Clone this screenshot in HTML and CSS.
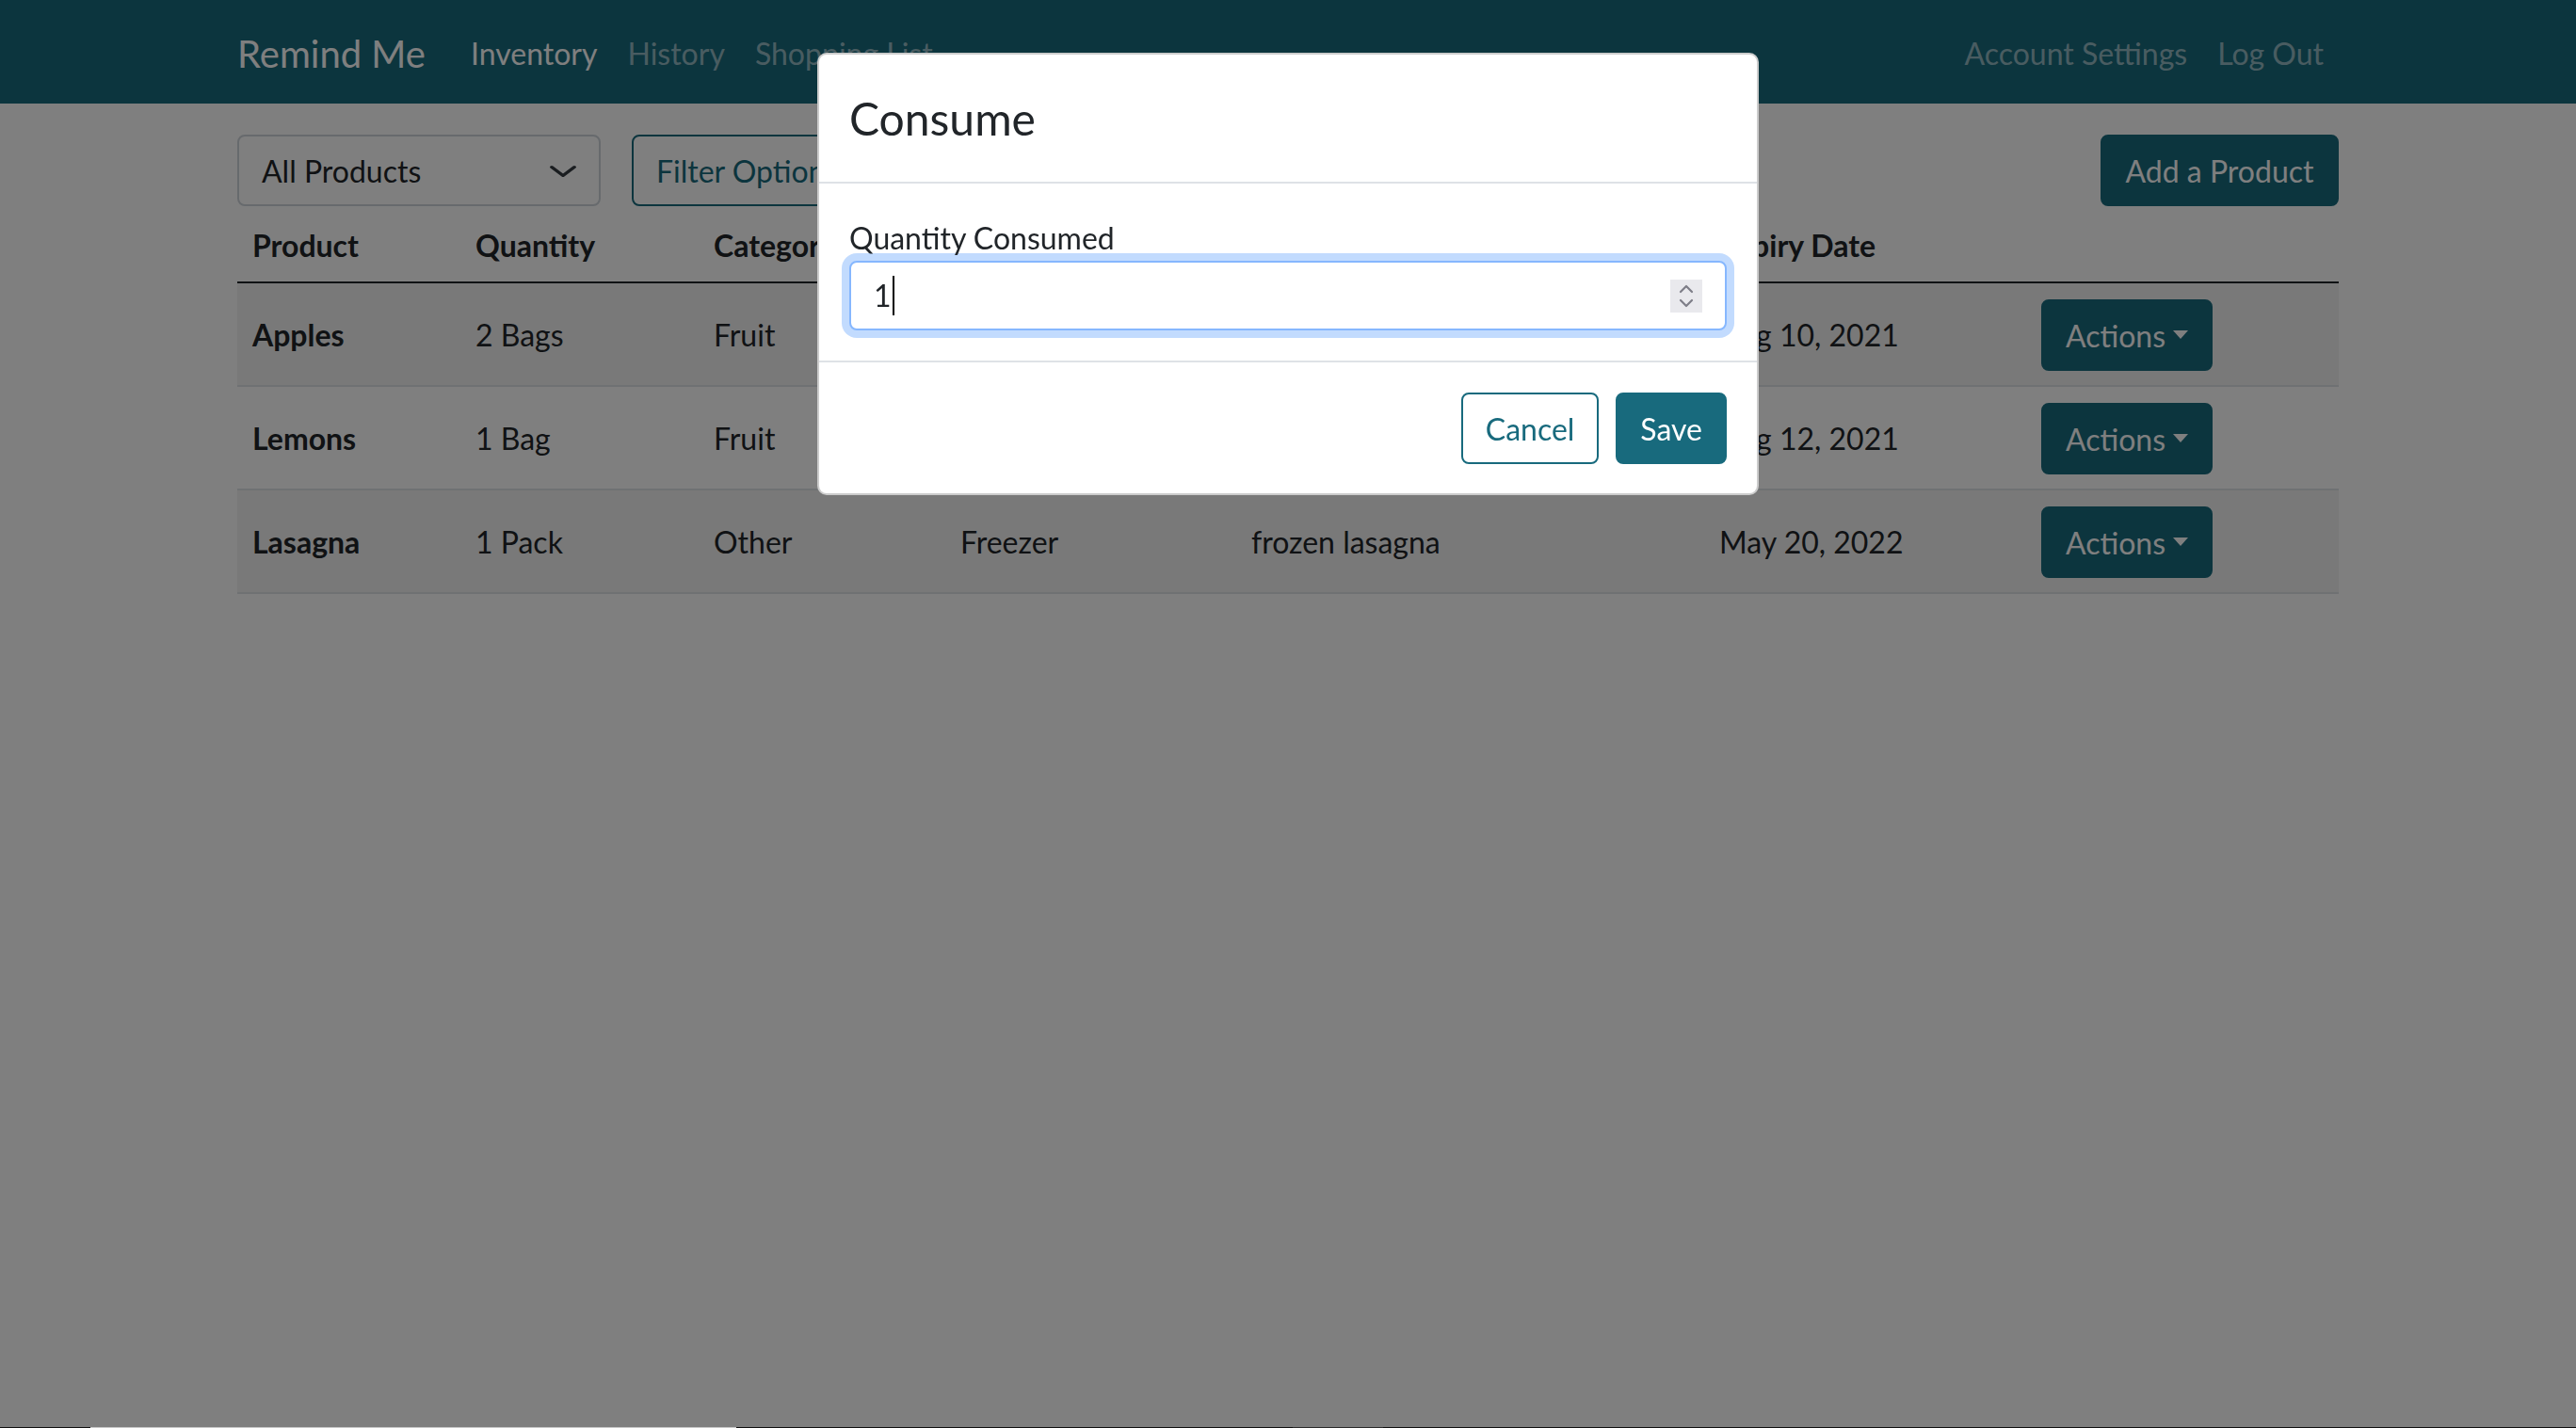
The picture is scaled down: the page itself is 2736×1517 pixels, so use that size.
FILE: index.html
```html
<!DOCTYPE html>
<html lang="en">
<head>
<meta charset="utf-8">
<title>Remind Me - Inventory</title>
<link rel="stylesheet" href="styles.css">
</head>
<body>
<nav class="navbar">
  <div class="container nav-inner">
    <a class="brand" href="#">Remind Me</a>
    <ul class="nav-links">
      <li><a class="nav-link active" href="#">Inventory</a></li>
      <li><a class="nav-link" href="#">History</a></li>
      <li><a class="nav-link" href="#">Shopping List</a></li>
    </ul>
    <ul class="nav-links nav-right">
      <li><a class="nav-link" href="#">Account Settings</a></li>
      <li><a class="nav-link" href="#">Log Out</a></li>
    </ul>
  </div>
</nav>

<main class="container main">
  <div class="toolbar">
    <button class="form-select" type="button">
      <span>All Products</span>
      <svg class="select-chevron" viewBox="0 0 16 16" width="32" height="24" preserveAspectRatio="none"><path d="M2 5l6 6 6-6" fill="none" stroke="#343a40" stroke-width="2" stroke-linecap="round" stroke-linejoin="round"/></svg>
    </button>
    <button class="btn btn-outline" type="button">Filter Options</button>
    <button class="btn btn-primary add-btn" type="button">Add a Product</button>
  </div>

  <table class="table">
    <colgroup>
      <col class="c1"><col class="c2"><col class="c3"><col class="c4"><col class="c5"><col class="c6"><col class="c7">
    </colgroup>
    <thead>
      <tr>
        <th>Product</th>
        <th>Quantity</th>
        <th>Category</th>
        <th>Location</th>
        <th>Description</th>
        <th>Expiry Date</th>
        <th></th>
      </tr>
    </thead>
    <tbody>
      <tr class="striped">
        <td class="name">Apples</td>
        <td>2 Bags</td>
        <td>Fruit</td>
        <td>Fridge</td>
        <td>red apples</td>
        <td>Aug 10, 2021</td>
        <td><button class="btn btn-primary dropdown-toggle" type="button">Actions</button></td>
      </tr>
      <tr>
        <td class="name">Lemons</td>
        <td>1 Bag</td>
        <td>Fruit</td>
        <td>Fridge</td>
        <td>yellow lemons</td>
        <td>Aug 12, 2021</td>
        <td><button class="btn btn-primary dropdown-toggle" type="button">Actions</button></td>
      </tr>
      <tr class="striped">
        <td class="name">Lasagna</td>
        <td>1 Pack</td>
        <td>Other</td>
        <td>Freezer</td>
        <td>frozen lasagna</td>
        <td>May 20, 2022</td>
        <td><button class="btn btn-primary dropdown-toggle" type="button">Actions</button></td>
      </tr>
    </tbody>
  </table>
</main>

<div class="modal-backdrop"></div>

<div class="modal" role="dialog" aria-modal="true" aria-labelledby="consume-title">
  <div class="modal-dialog">
    <div class="modal-content">
      <div class="modal-header">
        <h4 class="modal-title" id="consume-title">Consume</h4>
      </div>
      <div class="modal-body">
        <label class="form-label" for="qty">Quantity Consumed</label>
        <div class="form-control focused" id="qty" role="spinbutton" aria-valuenow="1">
          <span class="value">1</span><span class="caret"></span>
          <span class="spinner">
            <svg viewBox="0 0 34 35" width="34" height="35"><path d="M11 13l6-6 6 6" fill="none" stroke="#7e7e88" stroke-width="2.2" stroke-linecap="round" stroke-linejoin="round"/><path d="M11 22l6 6 6-6" fill="none" stroke="#7e7e88" stroke-width="2.2" stroke-linecap="round" stroke-linejoin="round"/></svg>
          </span>
        </div>
      </div>
      <div class="modal-footer">
        <button class="btn btn-outline" type="button">Cancel</button>
        <button class="btn btn-primary" type="button">Save</button>
      </div>
    </div>
  </div>
</div>

<div class="bottom-strip">
  <span class="seg seg-dark s1"></span>
  <span class="seg seg-light s2"></span>
  <span class="seg seg-dark s3"></span>
  <span class="seg seg-mid s4"></span>
  <span class="seg seg-dark s5"></span>
</div>
</body>
</html>
```

FILE: styles.css
```css
html {
  font-size: 32px;
}

* {
  box-sizing: border-box;
}

body {
  margin: 0;
  min-height: 1517px;
  font-family: Lato, "Noto Sans", "Liberation Sans", sans-serif;
  font-size: 32px;
  line-height: 1.5;
  color: #212529;
  background: #fff;
}

a {
  text-decoration: none;
}

ul {
  list-style: none;
  margin: 0;
  padding: 0;
}

.container {
  width: 2280px;
  margin: 0 auto;
  padding: 0 24px;
}

/* Navbar */
.navbar {
  height: 110px;
  background: #186a7d;
}

.nav-inner {
  height: 110px;
  display: flex;
  align-items: center;
  padding-top: 3px;
}

.brand {
  font-size: 40px;
  color: #fff;
  margin-right: 32px;
  padding: 10px 0;
  line-height: 60px;
}

.nav-links {
  display: flex;
  align-items: center;
}

.nav-right {
  margin-left: auto;
}

.nav-link {
  display: block;
  padding: 16px;
  color: rgba(255, 255, 255, 0.55);
  line-height: 48px;
}

.nav-link.active {
  color: #fff;
}

/* Main */
.main {
  padding-top: 33px;
}

.toolbar {
  display: flex;
  align-items: center;
  gap: 33px;
}

.form-select {
  width: 386px;
  height: 76px;
  display: flex;
  align-items: center;
  justify-content: space-between;
  padding: 2px 22px 0 24px;
  font: inherit;
  color: #212529;
  background: #fff;
  border: 2px solid #ced4da;
  border-radius: 8px;
  text-align: left;
}

.select-chevron {
  display: block;
}

.btn {
  display: inline-flex;
  align-items: center;
  height: 76px;
  padding: 2px 24px 0;
  font: inherit;
  line-height: 48px;
  border: 2px solid transparent;
  border-radius: 8px;
  cursor: pointer;
  white-space: nowrap;
}

.btn-primary {
  background: #186a7d;
  border-color: #186a7d;
  color: #fff;
}

.btn-outline {
  background: transparent;
  border-color: #186a7d;
  color: #186a7d;
}

.add-btn {
  margin-left: auto;
  width: 253px;
  justify-content: center;
}

.dropdown-toggle {
  width: 182px;
}

.dropdown-toggle::after {
  content: "";
  display: inline-block;
  margin-left: 8px;
  margin-top: -4px;
  border-top: 9px solid currentColor;
  border-right: 8px solid transparent;
  border-left: 8px solid transparent;
}

/* Table */
.table {
  width: 2232px;
  border-collapse: collapse;
  table-layout: fixed;
}

.c1 { width: 237px; }
.c2 { width: 253px; }
.c3 { width: 262px; }
.c4 { width: 309px; }
.c5 { width: 497px; }
.c6 { width: 342px; }
.c7 { width: 332px; }

.table th {
  text-align: left;
  font-weight: 700;
  padding: 18px 16px 14px;
  line-height: 48px;
  border-bottom: 2px solid #212529;
}

.table td {
  padding: 17px 16px 15px;
  vertical-align: middle;
  border-bottom: 2px solid #dee2e6;
  white-space: nowrap;
}

.table tr.striped td {
  background: rgba(0, 0, 0, 0.05);
}

.table td.name {
  font-weight: 700;
}

/* Modal */
.modal-backdrop {
  position: fixed;
  inset: 0;
  background: rgba(0, 0, 0, 0.5);
  z-index: 10;
}

.modal {
  position: fixed;
  inset: 0;
  z-index: 20;
}

.modal-dialog {
  width: 1000px;
  margin: 56px auto 0;
}

.modal-content {
  background: #fff;
  border: 2px solid rgba(0, 0, 0, 0.2);
  border-radius: 10px;
}

.modal-header {
  padding: 32px 32px 31px;
  border-bottom: 2px solid #dee2e6;
}

.modal-title {
  margin: 0;
  font-size: 48px;
  font-weight: 400;
  line-height: 72px;
}

.modal-body {
  padding: 32px 32px 32px;
}

.form-label {
  display: block;
  line-height: 48px;
  padding-top: 2px;
}

.form-control {
  height: 74px;
  display: flex;
  align-items: center;
  padding: 0 24px;
  border: 2px solid #ced4da;
  border-radius: 8px;
  background: #fff;
}

.form-control.focused {
  border-color: #86b7fe;
  box-shadow: 0 0 0 8px rgba(13, 110, 253, 0.25);
}

.value {
  line-height: 48px;
}

.caret {
  width: 2px;
  height: 42px;
  margin-left: 1px;
  background: #000;
}

.spinner {
  margin-left: auto;
  width: 34px;
  height: 35px;
  background: #e9e9ed;
  display: flex;
}

.modal-footer {
  display: flex;
  justify-content: flex-end;
  align-items: center;
  gap: 18px;
  padding: 32px 32px 31px;
  border-top: 2px solid #dee2e6;
}

/* Bottom artifact strip */
.bottom-strip {
  position: fixed;
  left: 0;
  right: 0;
  bottom: 0;
  height: 1px;
  display: flex;
  z-index: 30;
}

.seg { height: 1px; }
.seg-dark { background: #111; }
.seg-light { background: #c9c9c9; }
.seg-mid { background: #2b2b2b; }
.s1 { width: 96px; }
.s2 { width: 686px; }
.s3 { width: 591px; }
.s4 { width: 96px; }
.s5 { flex: 1; }
```
